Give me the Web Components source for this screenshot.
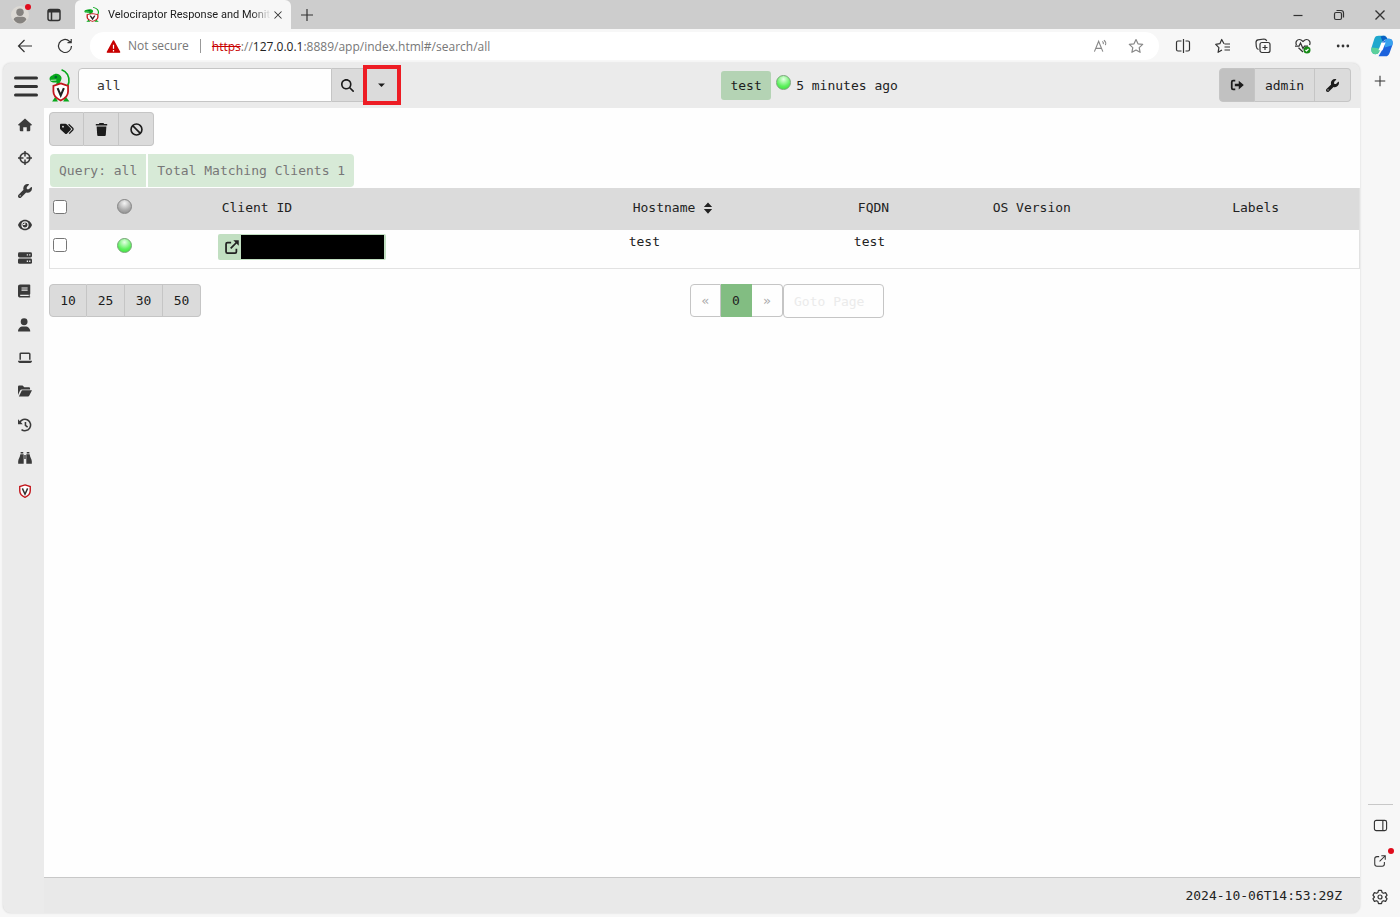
<!DOCTYPE html>
<html lang="en">
<head>
<meta charset="utf-8">
<title>Velociraptor Response and Monitoring</title>
<style>
body {
	margin: 0;
	background: #f7f7f7;
}
</style>
</head>
<body>
<browser-window>
	<tab-strip slot="tabs"></tab-strip>
	<address-bar slot="address"></address-bar>
	<velo-app>
		<velo-header slot="header"></velo-header>
		<velo-nav slot="nav"></velo-nav>
		<client-toolbar></client-toolbar>
		<client-summary></client-summary>
		<client-table></client-table>
		<client-pager></client-pager>
		<velo-footer slot="footer">2024-10-06T14:53:29Z</velo-footer>
	</velo-app>
	<edge-sidebar slot="side"></edge-sidebar>
</browser-window>

<script>
// Line icons are 16x16 with a stroke, solid ones set their own fill.
const shield = `
	<path d="M8 1l6 2v4.700c0 3.500-2.400 6-6 7.500-3.600-1.500-6-4-6-7.500V3z" fill="#fff" stroke="#c3161c" stroke-width="1.600"/>
	<path d="M5 5l3 6.700L11 5" fill="none" stroke="#333" stroke-width="1.700"/>`;

const logo = `
	<path d="M12 .8c5 2 7.500 6 7 12-.3 2.500-1.500 4-3.500 5" fill="none" stroke="#08a81c" stroke-width="1.500"/>
	<path d="M.5 9.500c0-2 1.500-3 3-3.500C5 4.500 8 4 10 5.500c2 1.300 2.500 3.500 1.500 5.500L9.500 15H6.500l1-2C5 13.500 2.500 13 1.300 11.800.8 11.200.5 10.400.5 9.500z" fill="#08a81c"/>
	<circle cx="6.500" cy="7.800" r="1.300" fill="#063"/>
	<path d="M1.500 11l5.500-.3" stroke="#fff" stroke-width=".7"/>
	<path d="M3 31.500l3-4.500 2.500 4.500zM13.500 31.500L16 27l3.500 4.500z" fill="#08a81c"/>
	<path d="M11.200 14l7 2.300v5.500c0 4-2.500 6.700-7 8.700-4.500-2-7-4.700-7-8.700v-5.500z" fill="#fff" stroke="#c3161c" stroke-width="1.700"/>
	<path d="M8.200 18.500l3 7 3-7" fill="none" stroke="#222" stroke-width="2"/>`;

const wrench = `<g class="solid" transform="scale(.03125)"><path d="M352 320c88.4 0 160-71.6 160-160c0-15.3-2.2-30.1-6.2-44.2c-3.1-10.8-16.4-13.2-24.3-5.3l-76.8 76.8c-3 3-7.1 4.700-11.3 4.700L336 192c-8.800 0-16-7.200-16-16l0-57.4c0-4.200 1.700-8.300 4.700-11.3l76.8-76.8c7.900-7.900 5.400-21.2-5.300-24.3C382.1 2.200 367.3 0 352 0C263.6 0 192 71.6 192 160c0 19.1 3.400 37.5 9.500 54.5L19.9 396.100C7.200 408.8 0 426.1 0 444.1C0 481.6 30.4 512 67.9 512c18 0 35.3-7.200 48-19.9L297.5 310.5c17 6.200 35.4 9.500 54.5 9.500zM80 408a24 24 0 1 1 0 48 24 24 0 1 1 0-48z"/></g>`;

const icons = {
	avatar: `<g stroke="none"><circle cx="8" cy="8" r="8" fill="#dcd9d4"/><circle cx="8" cy="5.500" r="3.300" fill="#85827f"/><path d="M2.500 12c0-2 2-2.500 5.500-2.500s5.500.5 5.500 2.500c-.8 2-3 3.500-5.500 3.500S3.300 14 2.500 12z" fill="#85827f"/></g>`,
	workspaces: `<rect x="2" y="2.500" width="12" height="11" rx="2" stroke-width="1.500"/><path d="M2 4h12" stroke-width="3"/><path d="M5.500 4v9.500" stroke-width="1.500"/>`,
	close: `<path d="M4 4l8 8M12 4l-8 8"/>`,
	plus: `<path d="M8 2v12M2 8h12"/>`,
	minimize: `<path d="M3.500 8.500h9"/>`,
	restore: `<rect x="3.500" y="5.500" width="7" height="7" rx="1.500"/><path d="M5.500 3.500h4.500c1.500 0 2.500 1 2.500 2.500v4.500"/>`,
	back: `<path d="M15 8H1.500M7.500 2L1.500 8l6 6"/>`,
	reload: `<path d="M14.500 8A6.500 6.500 0 1 1 12.400 3.200L14 4.500M14.200 1v3.700h-3.700"/>`,
	warning: `<path d="M8 2l6.500 12h-13z" fill="#c80000" stroke="#c80000" stroke-width="1.500" stroke-linejoin="round"/><path d="M8 6v4.500M8 11.800v1.400" stroke="#fff" stroke-width="1.300"/>`,
	read: `<path d="M1.500 13.500l4.500-11 4.500 11M3 10h6M10 2.500c1 .8 1.300 1.800 1 3M11.700 1.200c1.800 1.500 2.300 3.300 1.500 5.300"/>`,
	star: `<path d="M8 1.500l2 4.300 4.700.6-3.500 3.200.9 4.700L8 12l-4.100 2.300.9-4.700L1.300 6.400 6 5.800z" stroke-linejoin="round"/>`,
	split: `<path d="M8.500 1v14M6.500 3H3c-1 0-1.500.5-1.500 1.500v7c0 1 .5 1.500 1.500 1.500h3.500M10.500 3H13c1 0 1.500.5 1.500 1.500v7c0 1-.5 1.500-1.500 1.500h-2.500"/>`,
	favorites: `<path d="M9 5.800L6.700 1.500 4.900 5.700l-4.200.7 3.200 3.200-.8 4.700L7 12M9.500 6H15M9.500 9H15M9.500 12H15" stroke-linejoin="round"/>`,
	collections: `<rect x="5" y="4.500" width="10" height="10" rx="2"/><path d="M10 7v5M7.500 9.500h5M3.500 11.500C2 11 1.500 10 1.300 8.500L1 4.500c0-1.500.7-2.500 2-2.700L9 1c1.500 0 2.300.7 2.700 2"/>`,
	health: `<path d="M1.500 7C0 4 2 1.500 4.500 1.500 6 1.500 7 2.500 8 3.500c1-1 2-2 3.500-2C14 1.500 16 4 14.500 7M3.500 9.700L8 14M0 8.200h4L5.500 5 8 10.500l1.500-2.300H13"/><circle cx="12" cy="12" r="3.500" fill="#168a16" stroke="none"/><path d="M10.500 12l1 1 2-2" stroke="#fff"/>`,
	more: `<g class="solid"><circle cx="2.500" cy="8" r="1.600"/><circle cx="8" cy="8" r="1.600"/><circle cx="13.500" cy="8" r="1.600"/></g>`,
	copilot: `<g stroke="none"><path d="M5.500.5h5L8 5.500 6 12c-.6 1.500-1.500 2-3 2C.5 14-.2 11.500.4 9L2.500 2.500C3 1 4 .5 5.500.5z" fill="#20a8ce"/><path d="M.5 9L4 9.500l3 .5-1 2c-.7 1.500-1.500 2-3 2C.5 14-.2 11.500.5 9z" fill="#5bd09b"/><path d="M8 5.500L10 4c.6-1 1.500-1.300 3-1.300 2.500 0 3.200 2 2.500 4.800L13.500 13c-.6 1.700-1.500 2.500-3 2.500h-5L8 11z" fill="#1c62dc"/><path d="M7 1c2-1 4.500-.5 5 2L10 3.500 8.500 5z" fill="#0862c5"/><path d="M10 4c.6-1 1.500-1.300 3-1.300 2.500 0 3.200 2 2.500 4.800L10 9z" fill="#36a2ef"/><path d="M7.600 5.500h3L8.400 11h-3z" fill="#fff"/></g>`,
	panel: `<rect x="1.500" y="2.500" width="13" height="11" rx="2"/><path d="M10.500 2.500v11"/>`,
	popout: `<path d="M7 3H4.500C3 3 2 4 2 5.500v6C2 13 3 14 4.500 14h6c1.500 0 2.500-1 2.500-2.500V9M9.500 2H14v4.500M14 2L7.500 8.500"/>`,
	gear: `<path d="M6.500 1.300h3l.6 2.200 1.300.8 2.200-.7 1.500 2.600L13.500 8l1.600 1.800-1.500 2.600-2.200-.7-1.300.8-.6 2.200h-3l-.6-2.200-1.300-.8-2.200.7-1.500-2.600L2.500 8 .9 6.200l1.500-2.600 2.200.7 1.300-.8z" stroke-linejoin="round"/><circle cx="8" cy="8" r="2"/>`,
	bars: `<path d="M1 3.300h14M1 9h14M1 14.700h14" stroke-width="2" stroke-linecap="round"/>`,
	search: `<g class="solid" transform="scale(.03125)"><path d="M416 208c0 45.9-14.9 88.3-40 122.7L502.6 457.4c12.5 12.5 12.5 32.8 0 45.3s-32.8 12.5-45.3 0L330.7 376c-34.4 25.2-76.8 40-122.7 40C93.1 416 0 322.9 0 208S93.1 0 208 0S416 93.1 416 208zM208 352a144 144 0 1 0 0-288 144 144 0 1 0 0 288z"/></g>`,
	caret: `<path class="solid" d="M3 5h10l-5 5z"/>`,
	logout: `<path d="M6 3H3.500C2.300 3 2 3.500 2 4.500v7c0 1 .3 1.500 1.500 1.500H6" stroke-width="2"/><path class="solid" d="M5.500 6.500H10V3l5.800 5-5.800 5V9.500H5.500z"/>`,
	house: `<path class="solid" d="M8 .5l8 7.200-.8.9H14V14c0 .8-.4 1.200-1.200 1.200H10V10.500H6v4.700H3.200C2.400 15.200 2 14.800 2 14V8.600H.8L0 7.700z"/>`,
	crosshairs: `<circle cx="8" cy="8" r="5.500" stroke-width="2"/><path d="M8 0v6.300M8 9.700V16M0 8h6.300M9.700 8H16" stroke-width="1.700"/>`,
	wrench,
	eye: `<path class="solid" d="M8 2c4 0 6.800 2.800 8 6-1.200 3.200-4 6-8 6S1.200 11.200 0 8c1.200-3.200 4-6 8-6z"/><circle cx="8" cy="8" r="3.500" fill="none" stroke="#ebebeb" stroke-width="1.300"/><path d="M5.500 7.500h2.300V5.200" fill="none" stroke="#ebebeb"/>`,
	server: `<rect class="solid" y="1.500" width="16" height="6" rx="1.700"/><rect class="solid" y="8.700" width="16" height="6" rx="1.700"/><path d="M10 4.500h1.500M12.700 4.500h1.500M10 11.700h1.500M12.700 11.700h1.500" stroke="#ebebeb" stroke-width="1.500"/>`,
	book: `<path class="solid" d="M2.500.5H13c.7 0 1 .3 1 1v9.700c0 .5-.3.8-.7 1V14c.5 0 .7.300.7.7s-.3.800-.7.800H2.500C1 15.500 0 14.500 0 13V3C0 1.500 1 .5 2.500.5z"/><path d="M4 4.500h7M4 7h7M2.500 13h9.800" stroke="#ebebeb" stroke-width="1.200"/>`,
	user: `<g class="solid"><circle cx="7" cy="4.300" r="3.900"/><path d="M0 15.500c0-3.500 2.300-5.800 5.700-5.800h2.600c3.400 0 5.700 2.300 5.700 5.800z"/></g>`,
	laptop: `<path d="M2.500 10V3.500c0-.7.3-1 1-1h9c.7 0 1 .3 1 1V10" stroke-width="1.700"/><path class="solid" d="M0 11.200h16c0 1.500-.8 2.500-2.300 2.500H2.300C.8 13.700 0 12.700 0 11.200z"/>`,
	folder: `<path class="solid" d="M0 12.500V3.300C0 2.300.7 1.800 1.600 1.800h3.600l2 2h5c1 0 1.600.6 1.600 1.500v1H4.200c-.8 0-1.400.4-1.800 1.100zM1 14.200l3-6.300c.2-.5.5-.7 1-.7h11l-3.200 6.200c-.3.6-.7.800-1.300.8z"/>`,
	history: `<path d="M2 5.200A6.500 6.500 0 1 1 4 13.200M8.500 4.500v4l2.500 2" stroke-width="1.800"/><path class="solid" d="M0 1.500l5.500 5.700H0z"/>`,
	binoculars: `<path class="solid" d="M3 1.200h3v1.700H3zM10 1.200h3v1.700h-3zM2.700 3.700H6.500V14.500H.2V12C.2 9 2.200 7.700 2.700 3.700zM13.300 3.700H9.500V14.500h6.300V12c0-3-2-4.300-2.500-8.300zM7.200 4.500h1.600V9H7.200z"/>`,
	shield,
	tags: `<path class="solid" d="M0 3.500C0 2.600.6 2 1.500 2h4.700c.6 0 1 .2 1.400.6l4.300 4.300c.8.8.8 1.700 0 2.500l-3.800 3.800c-.8.8-1.700.8-2.500 0L.6 8.500C.2 8.100 0 7.700 0 7.200z"/><circle cx="3.400" cy="5.300" r="1.100" fill="#dbdbdb" stroke="none"/><path d="M9.800 2.500l4.700 4.600c.6.700.6 1.300 0 2l-4 4.200" stroke-width="1.500"/>`,
	trash: `<path class="solid" d="M5.500 0h5l.7 1.200H15v2H1v-2h3.800zM2 4.300h12l-.7 10.200c-.1 1-.6 1.500-1.500 1.500H4.200c-.9 0-1.400-.5-1.500-1.500z"/>`,
	ban: `<circle cx="8" cy="8" r="6.700" stroke-width="2"/><path d="M3.300 3.300l9.400 9.400" stroke-width="2"/>`,
	external: `<path d="M7 3H2.800C1.800 3 1.200 3.500 1.200 4.500v9c0 1 .6 1.500 1.600 1.500h8.700c1 0 1.500-.5 1.500-1.500V10M6.500 9.500L14 2" stroke-width="2"/><path class="solid" d="M9.500.3H15.700V6.500z"/>`,
	sort: `<path class="solid" d="M2.500 6.700L8 .5l5.500 6.200zM2.500 9.300L8 15.500l5.500-6.200z"/>`,
};

class BaseElement extends HTMLElement {
	connectedCallback() {
		if (this.shadowRoot) {
			return;
		}
		this.attachShadow({ mode: 'open' });
		this.shadowRoot.innerHTML = this.template();
	}
}

const buttonStyle = `
button {
	display: flex;
	align-items: center;
	justify-content: center;
	box-sizing: border-box;
	margin: 0;
	padding: 0;
	border: 1px solid #c5c5c5;
	background: #dbdbdb;
	color: #1c1c1c;
	font: inherit;
}
.group {
	display: flex;
}
.group button + button {
	border-left-width: 0;
}
.group button:first-child {
	border-radius: 4px 0 0 4px;
}
.group button:last-child {
	border-radius: 0 4px 4px 0;
}
`;

const chromeButtonStyle = `
button {
	display: flex;
	align-items: center;
	justify-content: center;
	flex: none;
	padding: 0;
	border: 0;
	background: none;
	color: #333;
}
`;

class UiIcon extends BaseElement {
	template() {
		const size = this.getAttribute('size') || 14;
		return `
<style>
:host {
	display: inline-flex;
	flex: none;
}
svg {
	display: block;
	fill: none;
	stroke: currentColor;
	stroke-width: 1.200;
}
.solid {
	fill: currentColor;
	stroke: none;
}
</style>
<svg width="${size}" height="${size}" viewBox="0 0 16 16" aria-hidden="true">${icons[this.getAttribute('name')]}</svg>`;
	}
}

class VeloLogo extends BaseElement {
	template() {
		return `
<style>
:host {
	display: inline-flex;
	flex: none;
}
</style>
<svg width="${this.getAttribute('width')}" height="${this.getAttribute('height')}" viewBox="0 0 21 32" preserveAspectRatio="none" aria-hidden="true">${logo}</svg>`;
	}
}

class StatusLed extends BaseElement {
	template() {
		return `
<style>
:host {
	display: inline-block;
	box-sizing: border-box;
	width: 15px;
	height: 15px;
	border: 1px solid #888;
	border-radius: 50%;
	background: radial-gradient(circle at 50% 25%, #f4f4f4, #aaa 60%, #858585);
}
:host([online]) {
	border-color: #7aa57a;
	background: radial-gradient(circle at 50% 25%, #e6ffe6, #5df15d 60%, #38dc38);
}
</style>`;
	}
}

class BrowserWindow extends BaseElement {
	template() {
		return `
<style>
:host {
	display: flex;
	flex-direction: column;
	min-height: 100vh;
	font-family: "Open Sans", "Noto Sans", sans-serif;
	font-size: 12px;
}
.body {
	display: flex;
	flex: 1;
	padding-left: 3px;
}
</style>
<slot name="tabs"></slot>
<slot name="address"></slot>
<div class="body">
	<slot></slot>
	<slot name="side"></slot>
</div>`;
	}
}

class TabStrip extends BaseElement {
	template() {
		return `
<style>
${chromeButtonStyle}
:host {
	display: flex;
	height: 29px;
	background: #cdcdcd;
}
.profile {
	position: relative;
	width: 40px;
}
.profile::after {
	content: "";
	position: absolute;
	top: 4px;
	right: 9px;
	width: 6px;
	height: 6px;
	border-radius: 50%;
	background: #e00b1c;
}
.workspaces {
	width: 28px;
	margin-right: 7px;
}
.tab {
	display: flex;
	align-items: center;
	box-sizing: border-box;
	width: 216px;
	padding: 0 6px 0 9px;
	border-radius: 6px 6px 0 0;
	background: #f7f7f7;
	color: #1c1c1c;
	font-family: Roboto, sans-serif;
	font-size: 11px;
}
.tab span {
	flex: 1;
	min-width: 0;
	margin-left: 8px;
	white-space: nowrap;
	mask-image: linear-gradient(to right, #000 88%, transparent);
}
.new {
	width: 32px;
}
.controls {
	display: flex;
	margin-left: auto;
}
.controls button {
	width: 41px;
}
</style>
<button class="profile" aria-label="Profile"><ui-icon name="avatar" size="18"></ui-icon></button>
<button class="workspaces" aria-label="Workspaces"><ui-icon name="workspaces" size="16"></ui-icon></button>
<div class="tab">
	<velo-logo width="16" height="15"></velo-logo>
	<span>Velociraptor Response and Monit</span>
	<button aria-label="Close tab"><ui-icon name="close" size="14"></ui-icon></button>
</div>
<button class="new" aria-label="New tab"><ui-icon name="plus" size="16"></ui-icon></button>
<div class="controls">
	<button aria-label="Minimize"><ui-icon name="minimize" size="16"></ui-icon></button>
	<button aria-label="Restore"><ui-icon name="restore" size="16"></ui-icon></button>
	<button aria-label="Close"><ui-icon name="close" size="18"></ui-icon></button>
</div>`;
	}
}

class AddressBar extends BaseElement {
	template() {
		return `
<style>
${chromeButtonStyle}
:host {
	display: flex;
	align-items: center;
	height: 34px;
	padding-left: 5px;
	background: #f7f7f7;
}
button {
	width: 40px;
	height: 28px;
}
.field {
	display: flex;
	align-items: center;
	flex: 1;
	height: 28px;
	margin: 0 4px 0 5px;
	padding: 0 5px 0 16px;
	border-radius: 14px;
	background: #fff;
	color: #777;
}
.security {
	margin: 0 11px 0 7px;
	padding-right: 11px;
	border-right: 1px solid #999;
	line-height: 14px;
}
.url {
	flex: 1;
}
s {
	color: #c80000;
}
b {
	color: #222;
	font-weight: normal;
}
.field button {
	width: 36px;
	color: #888;
}
.copilot {
	width: 37px;
}
</style>
<button aria-label="Back"><ui-icon name="back" size="16"></ui-icon></button>
<button aria-label="Refresh"><ui-icon name="reload" size="16"></ui-icon></button>
<div class="field">
	<ui-icon name="warning" size="15"></ui-icon>
	<span class="security">Not secure</span>
	<span class="url"><s>https</s>://<b>127.0.0.1</b>:8889/app/index.html#/search/all</span>
	<button aria-label="Read aloud"><ui-icon name="read" size="15"></ui-icon></button>
	<button aria-label="Add to favorites"><ui-icon name="star" size="16"></ui-icon></button>
</div>
<button aria-label="Split screen"><ui-icon name="split" size="16"></ui-icon></button>
<button aria-label="Favorites"><ui-icon name="favorites" size="16"></ui-icon></button>
<button aria-label="Collections"><ui-icon name="collections" size="16"></ui-icon></button>
<button aria-label="Browser essentials"><ui-icon name="health" size="16"></ui-icon></button>
<button aria-label="Settings and more"><ui-icon name="more" size="14"></ui-icon></button>
<button class="copilot" aria-label="Copilot"><ui-icon name="copilot" size="22"></ui-icon></button>`;
	}
}

class EdgeSidebar extends BaseElement {
	template() {
		return `
<style>
${chromeButtonStyle}
:host {
	display: flex;
	flex-direction: column;
	flex: none;
	width: 40px;
	padding-bottom: 2px;
}
button {
	position: relative;
	height: 36px;
}
button:first-child {
	margin-top: 3px;
}
hr {
	width: 25px;
	margin: auto auto 2px;
	border: 0;
	border-top: 1px solid #c8c8c8;
}
.badge::after {
	content: "";
	position: absolute;
	top: 5px;
	right: 6px;
	width: 6px;
	height: 6px;
	border-radius: 50%;
	background: #e00b1c;
}
</style>
<button aria-label="Customize"><ui-icon name="plus" size="14"></ui-icon></button>
<hr>
<button aria-label="Toggle sidebar"><ui-icon name="panel" size="15"></ui-icon></button>
<button class="badge" aria-label="Open externally"><ui-icon name="popout" size="14"></ui-icon></button>
<button aria-label="Settings"><ui-icon name="gear" size="16"></ui-icon></button>`;
	}
}

class VeloApp extends BaseElement {
	template() {
		return `
<style>
:host {
	display: grid;
	grid-template: auto 1fr auto / 41px 1fr;
	flex: 1;
	min-width: 0;
	margin-bottom: 4px;
	border-radius: 8px;
	overflow: hidden;
	background: #ebebeb;
	box-shadow: 0 0 2px #ccc;
	color: #222;
	font-family: "DejaVu Sans Mono", monospace;
	font-size: 13px;
}
.header {
	grid-column: 1 / 3;
}
.nav {
	grid-row: 2 / 4;
}
main {
	min-width: 0;
	padding: 4px 0 0 5px;
	background: #fefefe;
}
</style>
<div class="header"><slot name="header"></slot></div>
<div class="nav"><slot name="nav"></slot></div>
<main><slot></slot></main>
<slot name="footer"></slot>`;
	}
}

class VeloHeader extends BaseElement {
	template() {
		return `
<style>
${buttonStyle}
:host {
	display: flex;
	align-items: center;
	justify-content: space-between;
	height: 44px;
	padding: 0 9px 1px 11px;
}
.left, .client, form {
	display: flex;
	align-items: center;
}
.menu {
	margin-right: 11px;
	border: 0;
	background: none;
	color: #333;
}
form {
	margin: 0 0 0 7px;
}
input {
	box-sizing: border-box;
	width: 254px;
	height: 34px;
	padding: 0 18px;
	border: 1px solid #c5c5c5;
	border-radius: 4px 0 0 4px;
	background: #fefefe;
	color: #333;
	font: inherit;
}
form button {
	width: 32px;
	height: 34px;
	border-left: 0;
}
.drop {
	position: relative;
}
.drop button {
	width: 36px;
}
.highlight {
	position: absolute;
	inset: -3px -1px -3px -1px;
	border: 4px solid #ed1c24;
	pointer-events: none;
}
.client {
	gap: 5px;
}
.client button {
	width: 50px;
	height: 29px;
	border: 0;
	border-radius: 3px;
	background: #b4d3b4;
}
.client status-led {
	margin-bottom: 5px;
}
.group button {
	width: 36px;
	height: 34px;
}
.group .logout {
	background: #c1c1c1;
}
.group .user {
	width: 60px;
}
</style>
<div class="left">
	<button class="menu" aria-label="Menu"><ui-icon name="bars" size="24"></ui-icon></button>
	<velo-logo width="22" height="33"></velo-logo>
	<form>
		<input value="all" aria-label="Search clients">
		<button type="button" aria-label="Search"><ui-icon name="search" size="13"></ui-icon></button>
		<div class="drop">
			<button type="button" aria-label="Search options"><ui-icon name="caret" size="11"></ui-icon></button>
			<div class="highlight"></div>
		</div>
	</form>
</div>
<div class="client">
	<button>test</button>
	<status-led online></status-led>
	<span>5 minutes ago</span>
</div>
<div class="group">
	<button class="logout" aria-label="Log out"><ui-icon name="logout" size="14"></ui-icon></button>
	<button class="user">admin</button>
	<button aria-label="User settings"><ui-icon name="wrench" size="13"></ui-icon></button>
</div>`;
	}
}

class VeloNav extends BaseElement {
	template() {
		const items = ['house', 'crosshairs', 'wrench', 'eye', 'server', 'book', 'user', 'laptop', 'folder', 'history', 'binoculars', 'shield'];
		return `
<style>
:host {
	display: block;
}
nav {
	display: flex;
	flex-direction: column;
	height: 400px;
	padding-left: 2px;
}
a {
	display: flex;
	flex: 1;
	align-items: center;
	justify-content: center;
	color: #3a3a3a;
}
</style>
<nav>
	${items.map((name) => `<a href="#/${name}" aria-label="${name}"><ui-icon name="${name}" size="14"></ui-icon></a>`).join('')}
</nav>`;
	}
}

class ClientToolbar extends BaseElement {
	template() {
		return `
<style>
${buttonStyle}
:host {
	display: block;
	margin-bottom: 8px;
}
button {
	width: 35px;
	height: 34px;
}
</style>
<div class="group">
	<button aria-label="Label clients"><ui-icon name="tags" size="14"></ui-icon></button>
	<button aria-label="Delete clients"><ui-icon name="trash" size="13"></ui-icon></button>
	<button aria-label="Kill clients"><ui-icon name="ban" size="13"></ui-icon></button>
</div>`;
	}
}

class ClientSummary extends BaseElement {
	template() {
		return `
<style>
${buttonStyle}
:host {
	display: block;
	padding: 0 0 1px 1px;
}
.group {
	gap: 2px;
}
button {
	height: 33px;
	padding: 0 9px;
	border: 0;
	background: #d7ead7;
	color: #777;
}
</style>
<div class="group">
	<button disabled>Query: all</button>
	<button disabled>Total Matching Clients 1</button>
</div>`;
	}
}

class ClientTable extends BaseElement {
	template() {
		return `
<style>
:host {
	display: block;
	border: 1px solid #e2e2e2;
	border-top: 0;
}
table {
	width: 100%;
	table-layout: fixed;
	border-collapse: collapse;
}
th, td {
	padding: 4px 8px;
	text-align: left;
	vertical-align: top;
	font-weight: normal;
	line-height: 16px;
}
th {
	padding: 12px 12px 0;
	background: #dbdbdb;
}
thead tr {
	height: 42px;
}
tbody tr {
	height: 38px;
}
th:first-child, td:first-child {
	padding-left: 3px;
}
th:nth-child(2), td:nth-child(2) {
	padding-left: 7px;
}
th:nth-child(2) {
	padding-top: 11px;
}
td:nth-child(2) {
	padding-top: 8px;
}
.select { width: 4.600%; }
.online { width: 7.600%; }
.client { width: 31.400%; }
.host { width: 17.200%; }
.fqdn { width: 10.300%; }
.os { width: 18.300%; }
input {
	display: block;
	width: 14px;
	height: 14px;
	margin: 0;
}
td input {
	margin-top: 4px;
}
status-led {
	display: block;
}
.id {
	display: inline-flex;
	align-items: center;
	justify-content: space-between;
	box-sizing: border-box;
	width: 168px;
	height: 26px;
	padding: 0 2px 0 7px;
	border-radius: 2px;
	background: #c1dfc1;
	color: #222;
}
.id span {
	width: 143px;
	height: 24px;
	background: #000;
}
.sort {
	display: inline-flex;
	align-items: center;
	gap: 7px;
}
</style>
<table>
	<colgroup>
		<col class="select"><col class="online"><col class="client"><col class="host"><col class="fqdn"><col class="os"><col>
	</colgroup>
	<thead>
		<tr>
			<th><input type="checkbox" aria-label="Select all"></th>
			<th><status-led></status-led></th>
			<th>Client ID</th>
			<th><span class="sort">Hostname <ui-icon name="sort" size="12"></ui-icon></span></th>
			<th>FQDN</th>
			<th>OS Version</th>
			<th>Labels</th>
		</tr>
	</thead>
	<tbody>
		<tr>
			<td><input type="checkbox" aria-label="Select client"></td>
			<td><status-led online></status-led></td>
			<td><a class="id" href="#/host" aria-label="Open client"><ui-icon name="external" size="14"></ui-icon><span></span></a></td>
			<td>test</td>
			<td>test</td>
			<td></td>
			<td></td>
		</tr>
	</tbody>
</table>`;
	}
}

class ClientPager extends BaseElement {
	template() {
		return `
<style>
${buttonStyle}
:host {
	display: flex;
	align-items: start;
	margin-top: 15px;
}
.sizes button {
	width: 38px;
	height: 33px;
}
.pages {
	display: flex;
	flex: 1;
	justify-content: center;
	padding-left: 13px;
}
.pages button {
	width: 31px;
	height: 33px;
	background: #fefefe;
	color: #aaa;
}
.pages .current {
	border-color: #82bd82;
	background: #82bd82;
	color: #222;
}
input {
	box-sizing: border-box;
	width: 101px;
	height: 34px;
	padding: 0 10px;
	border: 1px solid #c5c5c5;
	border-radius: 4px;
	background: #fefefe;
	font: inherit;
}
input::placeholder {
	color: #ebebeb;
}
</style>
<div class="group sizes">
	<button>10</button>
	<button>25</button>
	<button>30</button>
	<button>50</button>
</div>
<div class="pages">
	<div class="group">
		<button aria-label="Previous page">«</button>
		<button class="current">0</button>
		<button aria-label="Next page">»</button>
	</div>
	<input placeholder="Goto Page" aria-label="Goto Page">
</div>`;
	}
}

class VeloFooter extends BaseElement {
	template() {
		return `
<style>
:host {
	padding: 0 18px;
	border-top: 1px solid #c8c8c8;
	background: #e9e9e9;
	line-height: 35px;
	text-align: right;
}
</style>
<slot></slot>`;
	}
}

customElements.define('ui-icon', UiIcon);
customElements.define('velo-logo', VeloLogo);
customElements.define('status-led', StatusLed);
customElements.define('browser-window', BrowserWindow);
customElements.define('tab-strip', TabStrip);
customElements.define('address-bar', AddressBar);
customElements.define('edge-sidebar', EdgeSidebar);
customElements.define('velo-app', VeloApp);
customElements.define('velo-header', VeloHeader);
customElements.define('velo-nav', VeloNav);
customElements.define('client-toolbar', ClientToolbar);
customElements.define('client-summary', ClientSummary);
customElements.define('client-table', ClientTable);
customElements.define('client-pager', ClientPager);
customElements.define('velo-footer', VeloFooter);
</script>
</body>
</html>
